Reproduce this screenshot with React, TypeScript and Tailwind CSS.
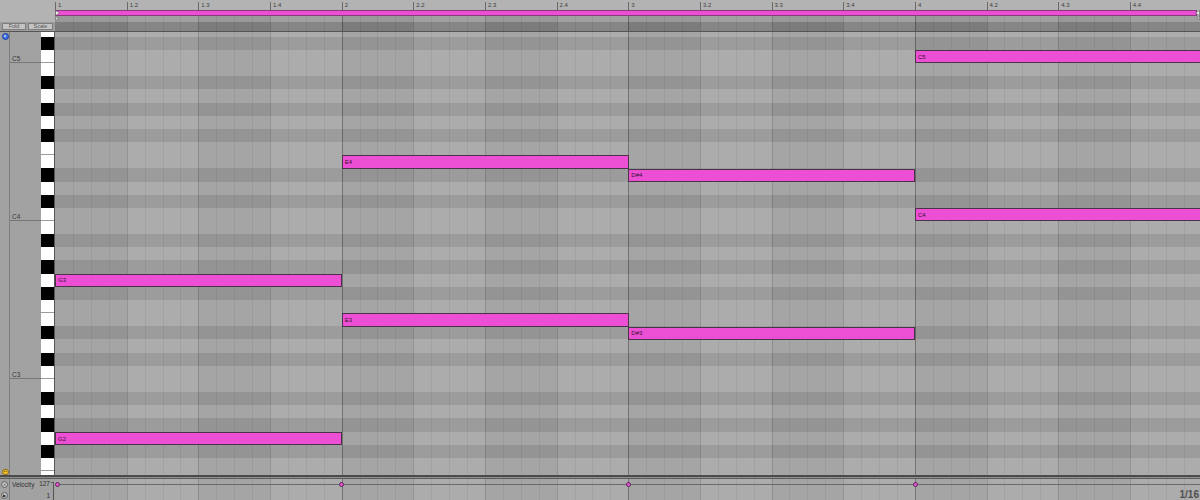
import clsx from 'clsx';

const ROW = 13.17;
const BEAT = 71.667;
const NAMES = ['C', 'C#', 'D', 'D#', 'E', 'F', 'F#', 'G', 'G#', 'A', 'A#', 'B'];
const TOP_PITCH = 62; // D5, mostly scrolled out of view
const C5_TOP = 18; // px from grid top to the top edge of the C5 row

const pitches = Array.from({ length: 35 }, (_, i) => TOP_PITCH - i);
const isBlack = (p: number) => NAMES[p % 12].includes('#');
const noteName = (p: number) => NAMES[p % 12] + Math.floor(p / 12);

const notes = [
  { p: 31, start: 0, len: 4 },
  { p: 43, start: 0, len: 4 },
  { p: 52, start: 4, len: 4 },
  { p: 40, start: 4, len: 4 },
  { p: 51, start: 8, len: 4 },
  { p: 39, start: 8, len: 4 },
  { p: 60, start: 12, len: 4.2 },
  { p: 48, start: 12, len: 4.2 },
];

const rulerLabels = ['1', '1.2', '1.3', '1.4', '2', '2.2', '2.3', '2.4', '3', '3.2', '3.3', '3.4', '4', '4.2', '4.3', '4.4'];

function Columns({ className }: { className?: string }) {
  return (
    <div className={clsx('flex h-full overflow-hidden', className)}>
      {rulerLabels.map((_, beat) => (
        <div
          key={beat}
          className={clsx('flex h-full w-[71.667px] shrink-0', beat % 2 === 1 && 'bg-white/[0.08]')}
        >
          {[0, 1, 2, 3].map((s) => (
            <div
              key={s}
              className={clsx(
                'h-full flex-1 border-l',
                s === 0 && beat % 4 === 0 && beat > 0 && 'border-black/[0.3]',
                s === 0 && beat % 4 !== 0 && 'border-black/[0.14]',
                s === 0 && beat === 0 && 'border-transparent',
                s !== 0 && 'border-black/[0.06]'
              )}
            />
          ))}
        </div>
      ))}
    </div>
  );
}

function HeaderLeft() {
  return (
    <div className="flex w-[55px] shrink-0 flex-col">
      <div className="h-[22px] bg-[#b3b3b3]" />
      <div className="flex h-[9px] items-start gap-[2px] bg-[#9d9d9d] pl-[2px] pt-[1px]">
        <div className="flex h-[6.5px] w-[24px] items-center justify-center border border-[#7d7d7d] bg-[#c4c4c4] text-[5.5px] leading-none text-[#555]">
          Fold
        </div>
        <div className="flex h-[6.5px] w-[25px] items-center justify-center border border-[#7d7d7d] bg-[#c4c4c4] text-[5.5px] leading-none text-[#555]">
          Scale
        </div>
      </div>
    </div>
  );
}

function HeaderGrid() {
  return (
    <div className="relative flex flex-1 flex-col overflow-hidden">
      {/* Ruler */}
      <div className="flex h-[10px] overflow-hidden bg-[#b3b3b3]">
        {rulerLabels.map((l) => (
          <div
            key={l}
            className="mt-[2px] h-[8px] w-[71.667px] shrink-0 border-l border-[#6a6a6a] pl-[2px] text-[6px] leading-[7px] text-[#3d3d3d]"
          >
            {l}
          </div>
        ))}
      </div>
      {/* Loop brace */}
      <div className="h-[6px] bg-[#b3b3b3] pr-[3px]">
        <div className="h-[6px] border border-[#8a3a7c] bg-[#ec4fd3]" />
      </div>
      <div className="h-[6px] bg-[#999999]">
        <Columns />
      </div>
      <div className="h-[9px] bg-[#7c7c7c]">
        <Columns />
      </div>
      {/* loop markers */}
      <svg className="absolute left-0 top-[10px]" width="6" height="12" viewBox="0 0 6 12">
        <path d="M0.5 0.5 L5 3 L0.5 5.5 Z" fill="#f2f2f2" stroke="#555" strokeWidth="0.6" />
        <path d="M0.5 6.5 L4 8.5 L0.5 10.5 Z" fill="#d8d8d8" stroke="#666" strokeWidth="0.6" />
      </svg>
      <svg className="absolute right-0 top-[10px]" width="5" height="10" viewBox="0 0 5 10">
        <path d="M4.5 0.5 L0.5 3 L4.5 5.5 Z" fill="#f2f2f2" stroke="#555" strokeWidth="0.6" />
        <path d="M4.5 6 L1.5 8 L4.5 9.8 Z" fill="#d8d8d8" stroke="#666" strokeWidth="0.6" />
      </svg>
    </div>
  );
}

function Note({ p, start, len }: { p: number; start: number; len: number }) {
  return (
    <div
      className="absolute flex items-center border border-[#4a3347] bg-[#ec4fd3] pl-[2px] text-[6px] leading-none text-[#3a1034]"
      style={{ top: C5_TOP + (60 - p) * ROW, left: start * BEAT, width: len * BEAT + 0.5, height: ROW }}
    >
      {noteName(p)}
    </div>
  );
}

function PianoRoll() {
  return (
    <div className="flex h-[443px] overflow-hidden">
      {/* icon strip */}
      <div className="flex w-[10px] shrink-0 flex-col border-r border-[#7e7e7e] bg-[#a2a2a2]">
        <div className="ml-[2px] mt-[1px] flex h-[6.5px] w-[6.5px] items-center justify-center rounded-full border border-[#1d3f9c] bg-[#3f74e6]">
          <div className="h-[2px] w-[2px] rounded-full bg-[#cfe0ff]" />
        </div>
        <div className="ml-[2px] mt-auto mb-[0px] flex h-[6.5px] w-[6.5px] items-center justify-center rounded-full border border-[#8a6a10] bg-[#f2c230] text-[4px] leading-none text-[#5a4400]">
          ••
        </div>
      </div>
      {/* note labels */}
      <div className="flex w-[31px] shrink-0 flex-col bg-[#a2a2a2]">
        {pitches.map((p, i) => (
          <div
            key={p}
            className={clsx(
              'flex shrink-0 items-end pl-[2px] text-[6.5px] leading-[7px] text-[#3a3a3a]',
              i === 0 ? 'h-[4.83px]' : 'h-[13.17px]',
              p % 12 === 0 && 'border-b border-[#777]'
            )}
          >
            {p % 12 === 0 ? noteName(p) : null}
          </div>
        ))}
      </div>
      {/* keys */}
      <div className="flex w-[14px] shrink-0 flex-col border-r border-[#555]">
        {pitches.map((p, i) => (
          <div
            key={p}
            className={clsx(
              'shrink-0',
              i === 0 ? 'h-[4.83px]' : 'h-[13.17px]',
              isBlack(p) ? 'bg-black' : 'bg-white',
              (p % 12 === 0 || p % 12 === 5) && 'border-b border-[#9a9a9a]'
            )}
          />
        ))}
      </div>
      {/* grid */}
      <div className="relative flex-1 overflow-hidden">
        <div className="flex flex-col">
          {pitches.map((p, i) => (
            <div
              key={p}
              className={clsx(
                'shrink-0',
                i === 0 ? 'h-[4.83px]' : 'h-[13.17px]',
                isBlack(p) ? 'bg-[#949494]' : 'bg-[#a5a5a5]'
              )}
            />
          ))}
        </div>
        <Columns className="absolute inset-0" />
        {notes.map((n) => (
          <Note key={n.p} {...n} />
        ))}
      </div>
    </div>
  );
}

function VelocityLane() {
  return (
    <div className="flex h-[21px]">
      <div className="flex w-[10px] shrink-0 flex-col items-center gap-[4px] border-r border-[#7e7e7e] bg-[#a2a2a2] pt-[2px]">
        <div className="flex h-[7px] w-[7px] items-center justify-center rounded-full border border-[#666] bg-[#bdbdbd] text-[5px] leading-none text-[#333]">
          ‹
        </div>
        <div className="flex h-[7px] w-[7px] items-center justify-center rounded-full border border-[#666] bg-[#bdbdbd] text-[4px] leading-none text-[#222]">
          ▶
        </div>
      </div>
      <div className="flex w-[45px] shrink-0 bg-[#a2a2a2] text-[6.5px] leading-[7px] text-[#333]">
        <div className="pl-[2px] pt-[2px]">Velocity</div>
        <div className="ml-auto flex flex-col items-end justify-between pb-[1px] pt-[0.5px]">
          <span>127</span>
          <span>1</span>
        </div>
        <div className="ml-[1px] mr-[1px] mt-[3px] w-[3px] border-r border-t border-[#555]" />
      </div>
      <div className="relative flex-1 overflow-hidden bg-[#a5a5a5]">
        <Columns className="absolute inset-0" />
        <div className="absolute left-[2px] right-0 top-[4.5px] h-px bg-[#6a6a6a]" />
        {[0, 4, 8, 12].map((b) => (
          <div
            key={b}
            className="absolute top-[2.5px] h-[5px] w-[5px] rounded-full border border-[#5a2a55] bg-[#ec4fd3]"
            style={{ left: Math.max(b * BEAT, 2) - 2.5 }}
          />
        ))}
        <div className="absolute bottom-0 right-[1px] text-[10px] font-bold leading-[11px] text-[#4f4f4f]">1/16</div>
      </div>
    </div>
  );
}

export default function App() {
  return (
    <div className="flex h-[500px] w-[1200px] flex-col overflow-hidden bg-[#a2a2a2] font-['Liberation_Sans',sans-serif]">
      <div className="flex h-[32px] border-b border-[#555]">
        <HeaderLeft />
        <HeaderGrid />
      </div>
      <PianoRoll />
      <div className="h-[4px] border-b border-t-2 border-b-[#5e5e5e] border-t-[#4b4b4b] bg-[#8e8e8e]" />
      <VelocityLane />
    </div>
  );
}
